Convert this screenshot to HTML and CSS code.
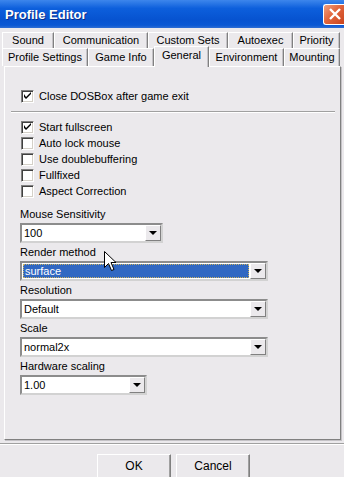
FILE: index.html
```html
<!DOCTYPE html>
<html lang="en">
<head>
    <meta charset="utf-8">
    <title>Profile Editor</title>
    <link rel="stylesheet" href="styles.css">
</head>
<body>
    <div class="window">
        <div class="titlebar">
            <span class="title">Profile Editor</span>
            <span class="close">
                <svg width="14" height="14" viewBox="0 0 14 14"><path d="M2 2 L12 12 M12 2 L2 12" stroke="#fff" stroke-width="2.4"/></svg>
            </span>
        </div>

        <div class="tabs">
            <div class="tabrow back">
                <div class="tab w-sound">Sound</div>
                <div class="tab w-comm">Communication</div>
                <div class="tab w-custom">Custom Sets</div>
                <div class="tab w-autoexec">Autoexec</div>
                <div class="tab w-priority">Priority</div>
            </div>
            <div class="tabrow front">
                <div class="tab w-profile">Profile Settings</div>
                <div class="tab w-game">Game Info</div>
                <div class="tab w-general selected">General</div>
                <div class="tab w-env">Environment</div>
                <div class="tab w-mount">Mounting</div>
            </div>
        </div>

        <div class="panel">
            <div class="check-row"><span class="box checked"></span>Close DOSBox after game exit</div>
            <div class="separator"></div>
            <div class="check-row"><span class="box checked"></span>Start fullscreen</div>
            <div class="check-row"><span class="box"></span>Auto lock mouse</div>
            <div class="check-row"><span class="box"></span>Use doublebuffering</div>
            <div class="check-row"><span class="box"></span>Fullfixed</div>
            <div class="check-row"><span class="box"></span>Aspect Correction</div>

            <div class="fields">
                <div class="label">Mouse Sensitivity</div>
                <div class="combo small"><span class="value">100</span><span class="drop"></span></div>
                <div class="label">Render method</div>
                <div class="combo wide focused"><span class="value"><span class="sel">surface</span></span><span class="drop"></span></div>
                <div class="label">Resolution</div>
                <div class="combo wide"><span class="value">Default</span><span class="drop"></span></div>
                <div class="label">Scale</div>
                <div class="combo wide"><span class="value">normal2x</span><span class="drop"></span></div>
                <div class="label">Hardware scaling</div>
                <div class="combo tiny"><span class="value">1.00</span><span class="drop"></span></div>
            </div>
        </div>

        <div class="footer">
            <div class="btn">OK</div>
            <div class="btn">Cancel</div>
        </div>

        <svg class="cursor" width="13" height="21" viewBox="0 0 13 21">
            <path d="M0.5 0.5 L0.5 16.5 L4.5 12.5 L7.5 19.5 L10 18.5 L7 11.5 L12 11.5 Z" fill="#fff" stroke="#000" stroke-width="1"/>
        </svg>
    </div>
</body>
</html>
```

FILE: styles.css
```css
* {
    box-sizing: border-box;
}

body {
    margin: 0;
    background: #ebe9ec;
    font-family: "Liberation Sans", Arial, sans-serif;
    font-size: 11px;
    color: #000;
}

.window {
    position: relative;
    width: 344px;
    height: 477px;
    overflow: hidden;
}

.titlebar {
    height: 28px;
    display: flex;
    align-items: center;
    justify-content: space-between;
    padding-left: 5px;
    background: linear-gradient(#3d86ec 0%, #0d5fdc 30%, #0753d0 70%, #0a58d4 90%, #2f6ed4 100%);
}

.title {
    color: #fff;
    font-weight: bold;
    font-size: 13px;
    text-shadow: 1px 1px 0 #0a2f8a;
}

.close {
    width: 22px;
    height: 21px;
    margin-right: -1px;
    border: 1px solid #fff;
    border-right: none;
    border-radius: 3px 0 0 3px;
    background: linear-gradient(135deg, #f0a080 0%, #e2653c 45%, #c8421c 100%);
    display: flex;
    align-items: center;
    justify-content: center;
}

/* tabs */
.tabs {
    margin-top: 4px;
    padding-left: 2px;
}

.tabrow {
    display: flex;
}

.tabrow.back {
    height: 16px;
}

.tabrow.front {
    height: 18px;
}

.tab {
    border-top: 1px solid #fff;
    border-left: 1px solid #fff;
    border-right: 1px solid #808080;
    box-shadow: inset -1px 0 0 #c4c2c6;
    text-align: center;
    line-height: 15px;
}

.front .tab {
    line-height: 17px;
}

.tab.selected {
    position: relative;
    margin-top: -2px;
    height: 21px;
    line-height: 16px;
    background: #ebe9ec;
    z-index: 2;
}

.w-sound { width: 52px; }
.w-comm { width: 94px; }
.w-custom { width: 80px; }
.w-autoexec { width: 65px; }
.w-priority { width: 47px; }
.w-profile { width: 86px; }
.w-game { width: 66px; }
.w-general { width: 55px; }
.w-env { width: 75px; }
.w-mount { width: 56px; }

/* page */
.panel {
    position: relative;
    margin: 0 3px 0 4px;
    height: 374px;
    border: 1px solid;
    border-color: #fff #808080 #808080 #fff;
    box-shadow: 1px 1px 0 #c4c2c6;
    padding: 21px 0 0 16px;
}

.check-row {
    height: 16px;
    display: flex;
    align-items: center;
}

.box {
    width: 13px;
    height: 13px;
    margin-right: 5px;
    background: #fff;
    border: 1px solid;
    border-color: #808080 #fff #fff #808080;
    box-shadow: inset 1px 1px 0 #404040, inset -1px -1px 0 #d4d0c8;
    position: relative;
}

.box.checked::after {
    content: "";
    position: absolute;
    left: 2px;
    top: 1px;
    width: 7px;
    height: 7px;
    background: no-repeat center / 7px 7px url("data:image/svg+xml,%3Csvg xmlns='http://www.w3.org/2000/svg' viewBox='0 0 7 7'%3E%3Cpath d='M0 2 L0 5 L2 7 L7 2 L7 0 L2 5 Z' fill='%23000'/%3E%3C/svg%3E");
}

.separator {
    height: 2px;
    margin: 7px 5px 6px -10px;
    border-top: 1px solid #a0a0a0;
    border-bottom: 1px solid #fff;
}

.fields {
    margin-top: 8px;
    margin-left: -1px;
}

.label {
    height: 14px;
    line-height: 14px;
    margin-bottom: 2px;
}

.combo {
    height: 20px;
    margin-bottom: 2px;
    display: flex;
    background: #fff;
    border: 2px solid;
    border-color: #8c8c8c #d2d2d2 #d2d2d2 #8c8c8c;
    box-shadow: inset 0 0 0 0 transparent;
}

.combo.small { width: 143px; }
.combo.wide { width: 248px; }
.combo.tiny { width: 127px; }

.value {
    flex: 1;
    padding-left: 2px;
    line-height: 16px;
    display: flex;
}

.focused .value {
    padding: 1px;
}

.sel {
    flex: 1;
    background: #3168c2;
    color: #fff;
    outline: 1px dotted #c8b060;
    outline-offset: -1px;
    padding-left: 2px;
    line-height: 14px;
}

.drop {
    width: 16px;
    background: #ebe9ec;
    border: 1px solid;
    border-color: #fff #808080 #808080 #fff;
    display: flex;
    align-items: center;
    justify-content: center;
}

.drop::after {
    content: "";
    border-left: 4px solid transparent;
    border-right: 4px solid transparent;
    border-top: 4px solid #000;
}

/* buttons */
.footer {
    margin-top: 3px;
    border-top: 1px solid #a0a0a0;
    box-shadow: inset 0 1px 0 #fff;
    display: flex;
    gap: 5px;
    padding: 10px 0 0 97px;
}

.btn {
    width: 74px;
    height: 26px;
    border: 1px solid;
    border-color: #fff #808080 #808080 #fff;
    box-shadow: inset -1px 0 0 #a0a0a0;
    text-align: center;
    line-height: 22px;
    font-size: 12px;
}

.cursor {
    position: absolute;
    left: 104px;
    top: 251px;
    z-index: 5;
}
```
